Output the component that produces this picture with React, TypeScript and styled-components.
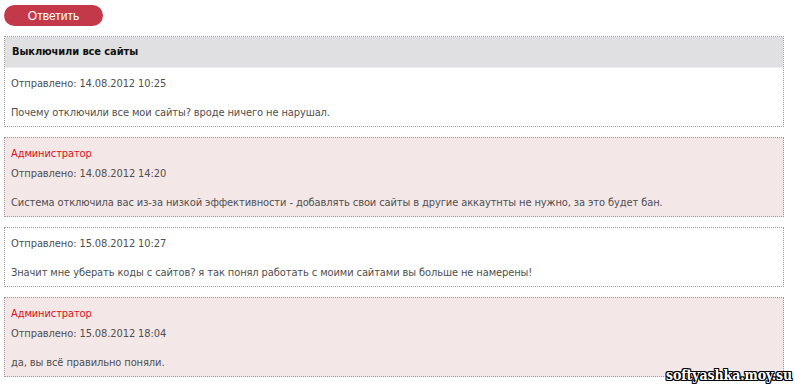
import React from 'react'
import styled, { createGlobalStyle } from 'styled-components'

interface Message {
  admin?: boolean
  sent: string
  text: string
}

const messages: Message[] = [
  {
    admin: true,
    sent: '14.08.2012 14:20',
    text: 'Система отключила вас из-за низкой эффективности - добавлять свои сайты в другие аккаутнты не нужно, за это будет бан.',
  },
  {
    sent: '15.08.2012 10:27',
    text: 'Значит мне уберать коды с сайтов? я так понял работать с моими сайтами вы больше не намерены!',
  },
  {
    admin: true,
    sent: '15.08.2012 18:04',
    text: 'да, вы всё правильно поняли.',
  },
]

const App: React.FC = () => {
  return (
    <Page>
      <GlobalStyle />
      <ReplyButton>Ответить</ReplyButton>
      <Thread>
        <Box>
          <Subject>Выключили все сайты</Subject>
          <BoxBody>
            <Line>Отправлено: 14.08.2012 10:25</Line>
            <Text>Почему отключили все мои сайты? вроде ничего не нарушал.</Text>
          </BoxBody>
        </Box>
        {messages.map((m, i) => (
          <Box key={i} $admin={m.admin}>
            <BoxBody>
              {m.admin && <Author>Администратор</Author>}
              <Line>Отправлено: {m.sent}</Line>
              <Text>{m.text}</Text>
            </BoxBody>
          </Box>
        ))}
      </Thread>
      <Watermark>softyashka.moy.su</Watermark>
    </Page>
  )
}

export default App

const GlobalStyle = createGlobalStyle`
  body {
    margin: 0;
    background: #fff;
  }
`

const Page = styled.div`
  position: relative;
  width: 795px;
  height: 386px;
  padding: 5px 11px 0 4px;
  box-sizing: border-box;
  font-family: 'DejaVu Sans Condensed', 'DejaVu Sans', sans-serif;
  font-size: 11px;
  letter-spacing: -0.1px;
  color: #505050;
`

const ReplyButton = styled.button`
  display: block;
  width: 99px;
  height: 21px;
  border: none;
  border-radius: 11px;
  background: #c3394a;
  color: #fff;
  font-family: 'Liberation Sans', Arial, sans-serif;
  font-size: 12px;
  padding: 0;
  cursor: pointer;
`

const Thread = styled.div`
  margin-top: 10px;
  display: flex;
  flex-direction: column;
  gap: 10px;
`

const Box = styled.div<{ $admin?: boolean }>`
  border: 1px dotted #9a9a9a;
  background: ${p => (p.$admin ? '#f4e7e7' : '#fff')};
`

const Subject = styled.div`
  height: 30px;
  line-height: 30px;
  padding: 0 7px;
  background: #e0e0e2;
  border-bottom: 1px solid #ececec;
  font-weight: bold;
  color: #111;
`

const BoxBody = styled.div`
  padding: 6px 6px 3px;
`

const Line = styled.div`
  line-height: 20px;
`

const Author = styled(Line)`
  color: #d8101c;
`

const Text = styled(Line)`
  margin-top: 9px;
`

const Watermark = styled.div`
  position: absolute;
  right: 3px;
  bottom: 3px;
  font-family: 'DejaVu Serif Condensed', 'DejaVu Serif', serif;
  font-weight: bold;
  font-size: 14px;
  color: #fff;
  text-shadow: -1px -1px 0 #000, 1px -1px 0 #000, -1px 1px 0 #000, 1px 1px 0 #000, 0 1px 0 #000,
    0 -1px 0 #000, 1px 0 0 #000, -1px 0 0 #000;
`
